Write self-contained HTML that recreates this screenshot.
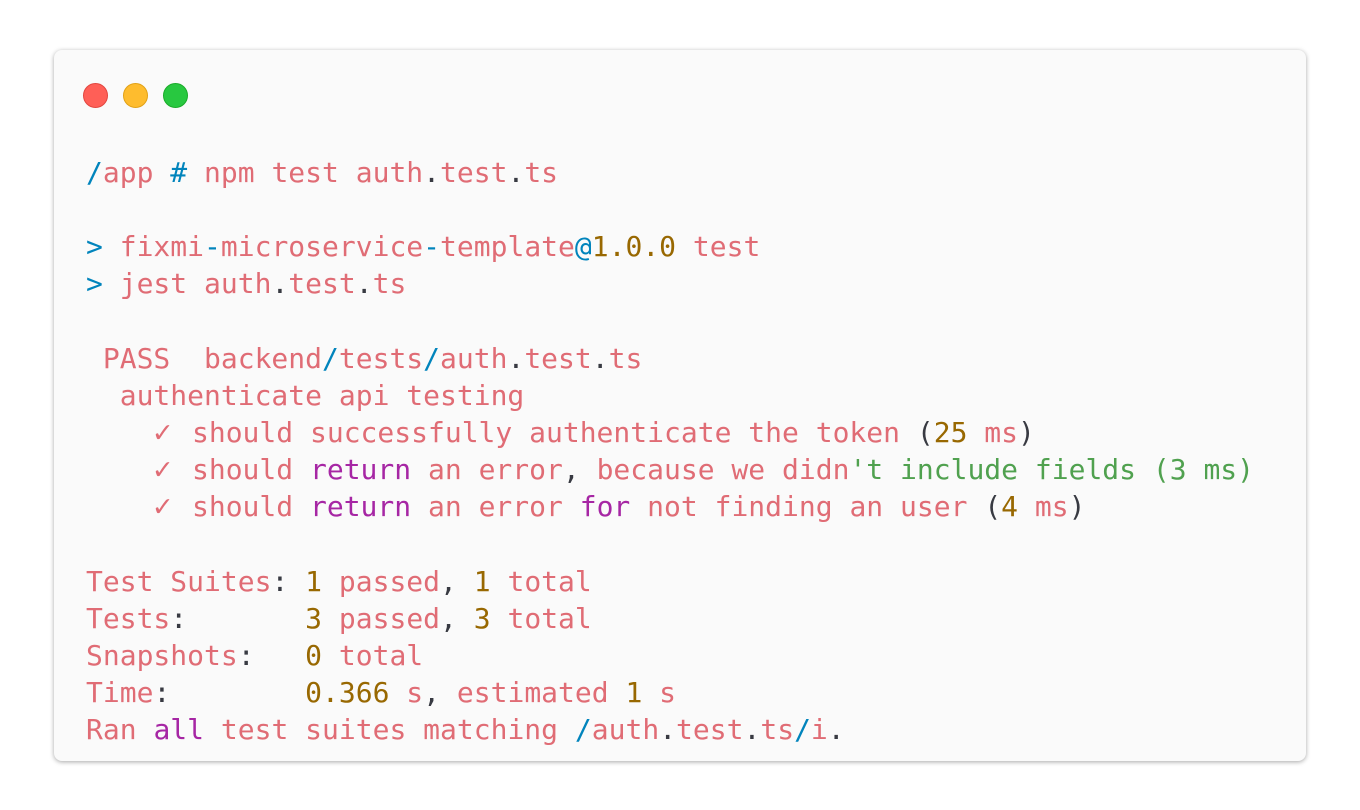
<!DOCTYPE html>
<html><head><meta charset="utf-8"><style>
html,body{margin:0;padding:0;background:#fff;width:1360px;height:810px;overflow:hidden}
.card{position:absolute;left:54px;top:50px;width:1252px;height:711px;background:#fafafa;border-radius:8px;box-shadow:0 1px 5px rgba(0,0,0,.35);}
.dot{position:absolute;top:33px;width:25px;height:25px;border-radius:50%;box-sizing:border-box}
pre{position:absolute;left:32px;top:104px;margin:0;font-family:"DejaVu Sans Mono","Liberation Mono",monospace;font-size:28px;line-height:37.15px;color:#e06c75;white-space:pre}
.b{color:#0184bc}.k{color:#383a42}.y{color:#986801}.p{color:#a626a4}.g{color:#50a14f}
.c{display:inline-block;width:21.7px;font-size:30px;line-height:0}
</style></head><body>
<div class="card">
<div class="dot" style="left:29px;background:#ff5f57;border:1px solid #e2463f"></div>
<div class="dot" style="left:69px;background:#febc2e;border:1px solid #e1a116"></div>
<div class="dot" style="left:109px;background:#28c840;border:1px solid #1aab29"></div>
<pre><span class="b">/</span>app <span class="b">#</span> npm test auth<span class="k">.</span>test<span class="k">.</span>ts

<span class="b">&gt;</span> fixmi<span class="b">-</span>microservice<span class="b">-</span>template<span class="b">@</span><span class="y">1.0.0</span> test
<span class="b">&gt;</span> jest auth<span class="k">.</span>test<span class="k">.</span>ts

 PASS  backend<span class="b">/</span>tests<span class="b">/</span>auth<span class="k">.</span>test<span class="k">.</span>ts
  authenticate api testing
    <span class="c">✓</span> should successfully authenticate the token <span class="k">(</span><span class="y">25</span> ms<span class="k">)</span>
    <span class="c">✓</span> should <span class="p">return</span> an error<span class="k">,</span> because we didn<span class="g">'t include fields (3 ms)</span>
    <span class="c">✓</span> should <span class="p">return</span> an error <span class="p">for</span> not finding an user <span class="k">(</span><span class="y">4</span> ms<span class="k">)</span>

Test Suites<span class="k">:</span> <span class="y">1</span> passed<span class="k">,</span> <span class="y">1</span> total
Tests<span class="k">:</span>       <span class="y">3</span> passed<span class="k">,</span> <span class="y">3</span> total
Snapshots<span class="k">:</span>   <span class="y">0</span> total
Time<span class="k">:</span>        <span class="y">0.366</span> s<span class="k">,</span> estimated <span class="y">1</span> s
Ran <span class="p">all</span> test suites matching <span class="b">/</span>auth<span class="k">.</span>test<span class="k">.</span>ts<span class="b">/</span>i<span class="k">.</span></pre>
</div>
</body></html>
